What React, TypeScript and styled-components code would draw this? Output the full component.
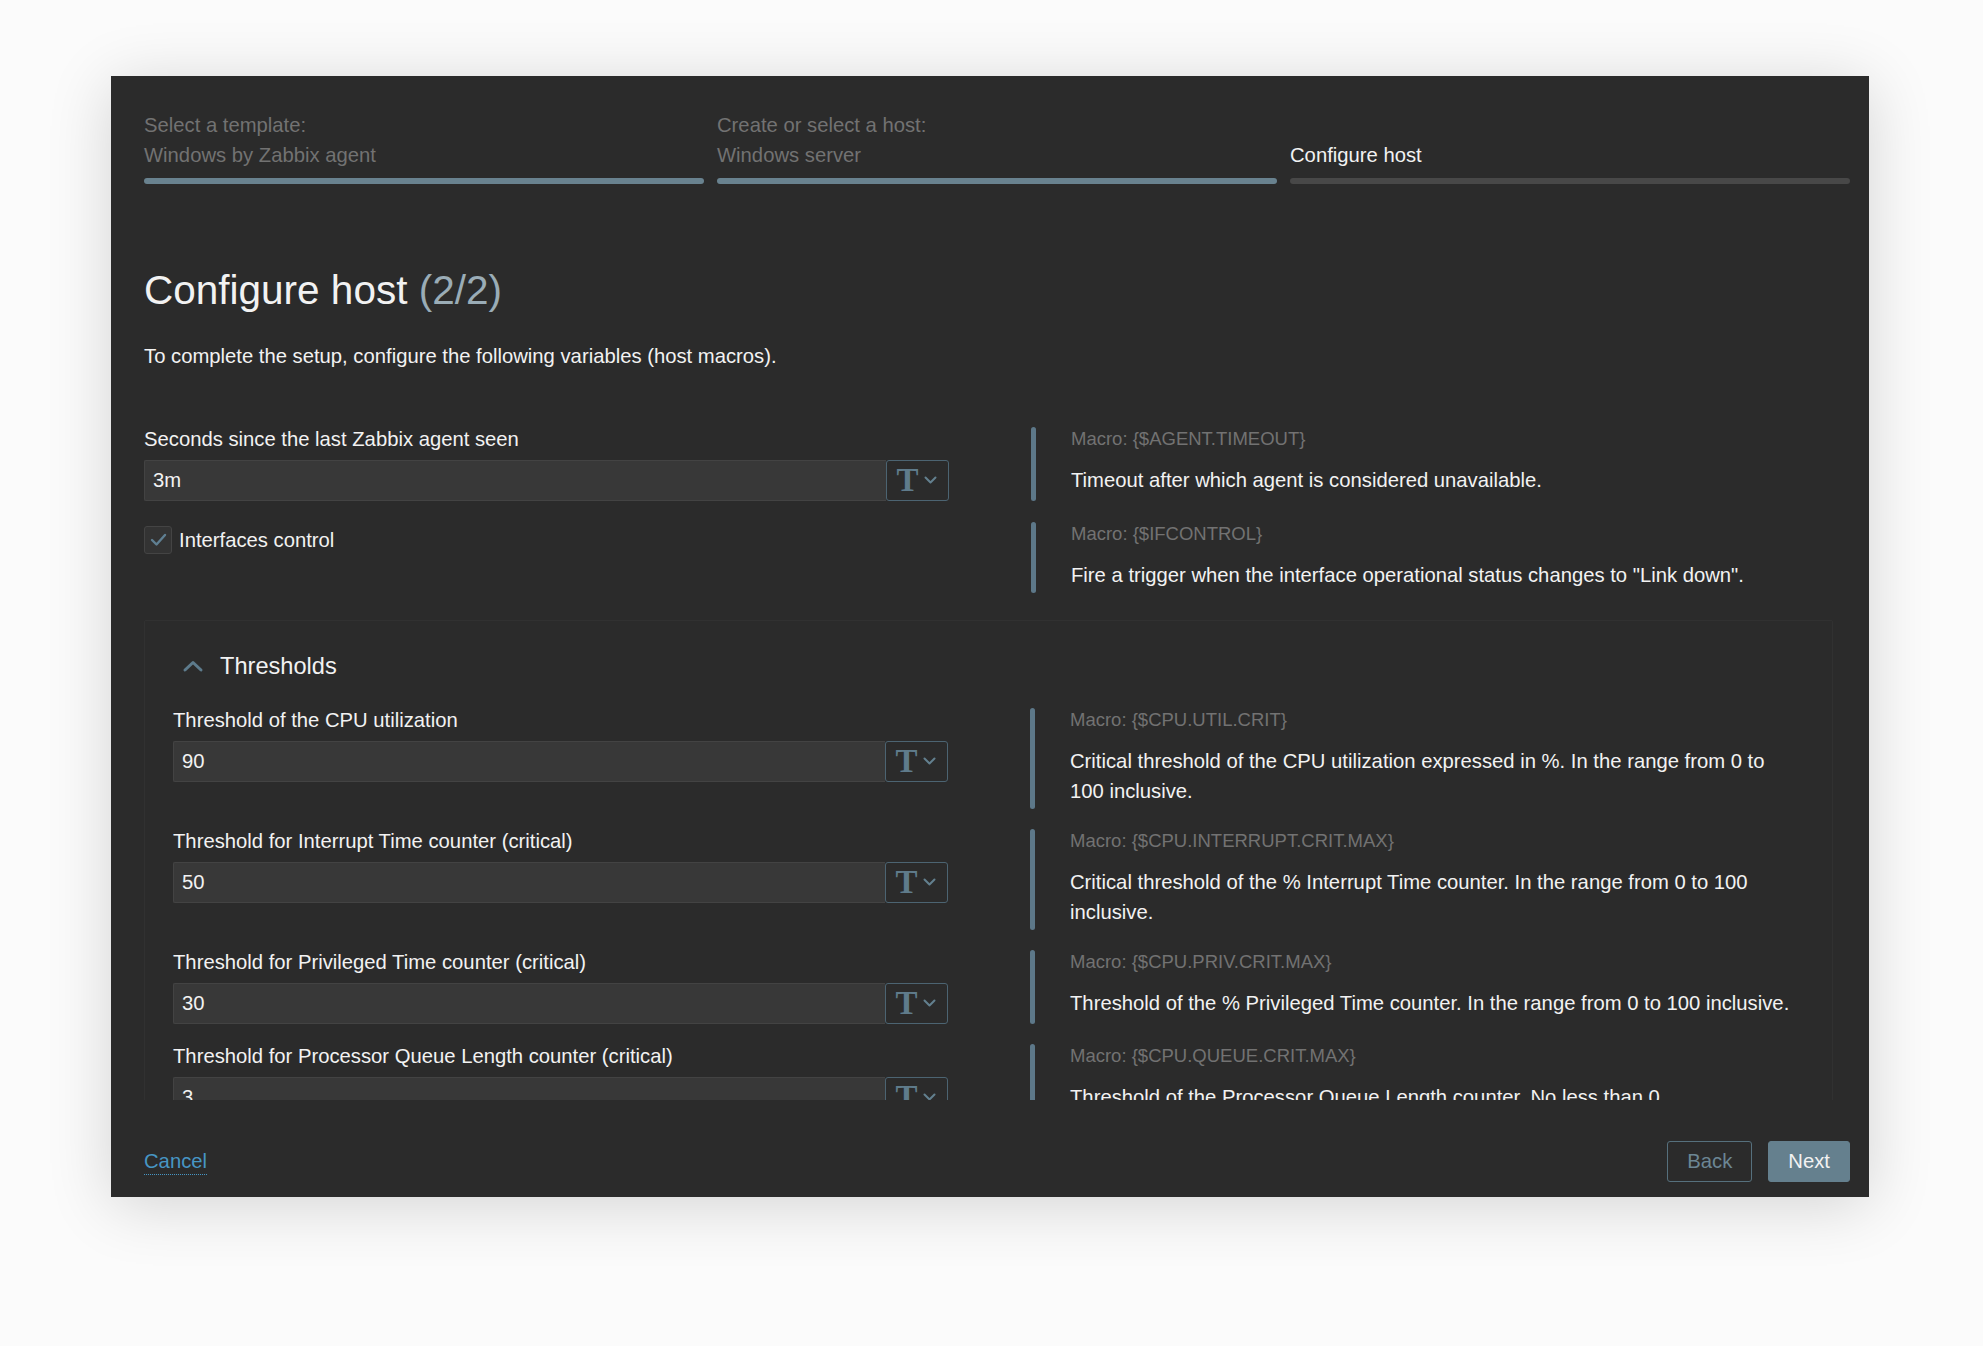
import React from "react";
import styled, { createGlobalStyle } from "styled-components";

const GlobalStyle = createGlobalStyle`
  html, body {
    margin: 0;
    padding: 0;
    background: #fbfbfb;
  }
  * {
    box-sizing: border-box;
  }
`;

interface StepInfo {
  title: string;
  value: string;
  done: boolean;
}

interface MacroField {
  label: string;
  value: string;
  macro: string;
  description: string;
}

const steps: StepInfo[] = [
  { title: "Select a template:", value: "Windows by Zabbix agent", done: true },
  { title: "Create or select a host:", value: "Windows server", done: true },
  { title: "", value: "Configure host", done: false },
];

const thresholds: MacroField[] = [
  {
    label: "Threshold of the CPU utilization",
    value: "90",
    macro: "{$CPU.UTIL.CRIT}",
    description:
      "Critical threshold of the CPU utilization expressed in %. In the range from 0 to 100 inclusive.",
  },
  {
    label: "Threshold for Interrupt Time counter (critical)",
    value: "50",
    macro: "{$CPU.INTERRUPT.CRIT.MAX}",
    description:
      "Critical threshold of the % Interrupt Time counter. In the range from 0 to 100 inclusive.",
  },
  {
    label: "Threshold for Privileged Time counter (critical)",
    value: "30",
    macro: "{$CPU.PRIV.CRIT.MAX}",
    description:
      "Threshold of the % Privileged Time counter. In the range from 0 to 100 inclusive.",
  },
  {
    label: "Threshold for Processor Queue Length counter (critical)",
    value: "3",
    macro: "{$CPU.QUEUE.CRIT.MAX}",
    description:
      "Threshold of the Processor Queue Length counter. No less than 0.",
  },
];

function TypeSelect() {
  return (
    <TypeButton>
      <TypeGlyph>T</TypeGlyph>
      <svg width="13" height="9" viewBox="0 0 13 9">
        <polyline
          points="1.5,1.5 6.5,6.5 11.5,1.5"
          fill="none"
          stroke="#63808f"
          strokeWidth="2"
          strokeLinecap="round"
          strokeLinejoin="round"
        />
      </svg>
    </TypeButton>
  );
}

function MacroInput(props: { value: string }) {
  return (
    <InputGroup>
      <TextInput>{props.value}</TextInput>
      <TypeSelect />
    </InputGroup>
  );
}

function Help(props: { macro: string; description: string }) {
  return (
    <HelpBlock>
      <HelpBar />
      <HelpText>
        <MacroName>Macro: {props.macro}</MacroName>
        <HelpDescription>{props.description}</HelpDescription>
      </HelpText>
    </HelpBlock>
  );
}

export default function App() {
  return (
    <>
      <GlobalStyle />
      <Page>
        <Modal>
          <Steps>
            {steps.map((s) => (
              <Step key={s.value}>
                <StepLabel $done={s.done}>
                  {s.title && <div>{s.title}</div>}
                  <div>{s.value}</div>
                </StepLabel>
                <StepBar $done={s.done} />
              </Step>
            ))}
          </Steps>

          <Body>
            <Title>
              Configure host <TitleCount>(2/2)</TitleCount>
            </Title>
            <Intro>
              To complete the setup, configure the following variables (host
              macros).
            </Intro>

            <FormGrid $left={805}>
              <Field>
                <FieldLabel>Seconds since the last Zabbix agent seen</FieldLabel>
                <MacroInput value="3m" />
              </Field>
              <Help
                macro="{$AGENT.TIMEOUT}"
                description="Timeout after which agent is considered unavailable."
              />

              <CheckRow>
                <CheckBox>
                  <svg width="17" height="14" viewBox="0 0 17 14">
                    <polyline
                      points="2,7 6.5,11.5 15,2"
                      fill="none"
                      stroke="#5f7f92"
                      strokeWidth="2.4"
                      strokeLinecap="round"
                      strokeLinejoin="round"
                    />
                  </svg>
                </CheckBox>
                <CheckLabel>Interfaces control</CheckLabel>
              </CheckRow>
              <Help
                macro="{$IFCONTROL}"
                description={'Fire a trigger when the interface operational status changes to "Link down".'}
              />
            </FormGrid>

            <Section>
              <SectionHeader>
                <svg width="22" height="14" viewBox="0 0 22 14">
                  <polyline
                    points="3,11 11,3.5 19,11"
                    fill="none"
                    stroke="#5d7b8c"
                    strokeWidth="3"
                    strokeLinecap="round"
                    strokeLinejoin="round"
                  />
                </svg>
                <SectionTitle>Thresholds</SectionTitle>
              </SectionHeader>
              <FormGrid $left={775} $gap={20}>
                {thresholds.map((t) => (
                  <React.Fragment key={t.macro}>
                    <Field>
                      <FieldLabel>{t.label}</FieldLabel>
                      <MacroInput value={t.value} />
                    </Field>
                    <Help macro={t.macro} description={t.description} />
                  </React.Fragment>
                ))}
              </FormGrid>
            </Section>
          </Body>

          <Footer>
            <CancelLink>Cancel</CancelLink>
            <ButtonRow>
              <Button>Back</Button>
              <Button $primary>Next</Button>
            </ButtonRow>
          </Footer>
        </Modal>
      </Page>
    </>
  );
}

const Page = styled.div`
  width: 1983px;
  height: 1346px;
  padding: 76px 0 0 111px;
  font-family: "Liberation Sans", Arial, sans-serif;
  overflow: hidden;
`;

const Modal = styled.div`
  width: 1758px;
  height: 1121px;
  display: flex;
  flex-direction: column;
  background: #2b2b2b;
  color: #f2f2f2;
  box-shadow: 0 8px 60px rgba(0, 0, 0, 0.16);
`;

// steps
const Steps = styled.div`
  display: grid;
  grid-template-columns: repeat(3, 1fr);
  column-gap: 13px;
  padding: 34px 19px 0 33px;
  flex-shrink: 0;
`;

const Step = styled.div`
  display: flex;
  flex-direction: column;
`;

const StepLabel = styled.div<{ $done: boolean }>`
  height: 60px;
  display: flex;
  flex-direction: column;
  justify-content: flex-end;
  font-size: 20.25px;
  line-height: 30px;
  color: ${(p) => (p.$done ? "#727272" : "#f2f2f2")};
`;

const StepBar = styled.div<{ $done: boolean }>`
  margin-top: 8px;
  height: 6px;
  border-radius: 3px;
  background: ${(p) => (p.$done ? "#69828f" : "#484848")};
`;

// body
const Body = styled.div`
  flex: 1;
  overflow: hidden;
  padding: 82px 19px 0 33px;
`;

const Title = styled.h1`
  margin: 0;
  font-size: 40.5px;
  line-height: 48px;
  font-weight: normal;
  color: #f2f2f2;
`;

const TitleCount = styled.span`
  color: #9aacb6;
`;

const Intro = styled.p`
  margin: 27px 0 56px;
  font-size: 20.25px;
  line-height: 30px;
`;

const FormGrid = styled.div<{ $left: number; $gap?: number }>`
  display: grid;
  grid-template-columns: ${(p) => p.$left}px 1fr;
  column-gap: 82px;
  row-gap: ${(p) => p.$gap ?? 21}px;
  align-items: start;
`;

const Field = styled.div`
  display: flex;
  flex-direction: column;
`;

const FieldLabel = styled.label`
  font-size: 20.25px;
  line-height: 25px;
  margin-bottom: 8px;
`;

const InputGroup = styled.div`
  display: flex;
  height: 41px;
`;

const TextInput = styled.div`
  flex: 1;
  display: flex;
  align-items: center;
  padding: 0 8px;
  background: #383838;
  border: 1px solid #434343;
  border-right: none;
  border-radius: 2px 0 0 2px;
  font-size: 20.25px;
`;

const TypeButton = styled.div`
  width: 63px;
  display: flex;
  align-items: center;
  justify-content: center;
  gap: 5px;
  padding-right: 2px;
  background: #2b2b2b;
  border: 1px solid #4c6472;
  border-radius: 3px;
`;

const TypeGlyph = styled.span`
  font-family: "Liberation Serif", "Times New Roman", serif;
  font-size: 33px;
  line-height: 1;
  font-weight: bold;
  color: #5f7b8b;
`;

const CheckRow = styled.div`
  display: flex;
  align-items: center;
  height: 30px;
  margin-top: 3px;
`;

const CheckBox = styled.span`
  width: 28px;
  height: 28px;
  display: flex;
  align-items: center;
  justify-content: center;
  background: #333333;
  border: 1px solid #444444;
  border-radius: 3px;
`;

const CheckLabel = styled.span`
  margin-left: 7px;
  font-size: 20.25px;
`;

// help column
const HelpBlock = styled.div`
  display: flex;
  align-self: stretch;
  align-items: stretch;
`;

const HelpBar = styled.div`
  width: 5px;
  flex-shrink: 0;
  border-radius: 3px;
  background: #5d7889;
`;

const HelpText = styled.div`
  margin-left: 35px;
  padding-bottom: 3px;
`;

const MacroName = styled.div`
  font-size: 18.5px;
  line-height: 24px;
  color: #727272;
`;

const HelpDescription = styled.div`
  margin-top: 14px;
  font-size: 20.25px;
  line-height: 30px;
`;

// thresholds
const Section = styled.div`
  margin: 27px 17px 0 0;
  padding: 30px 35px 30px 28px;
  border: 1px solid #313131;
  border-radius: 2px;
`;

const SectionHeader = styled.div`
  display: flex;
  align-items: center;
  height: 30px;
  margin-bottom: 27px;
  padding-left: 9px;
`;

const SectionTitle = styled.span`
  margin-left: 16px;
  font-size: 23.6px;
`;

// footer
const Footer = styled.div`
  flex-shrink: 0;
  height: 97px;
  display: flex;
  align-items: flex-start;
  justify-content: space-between;
  padding: 41px 19px 15px 33px;
`;

const CancelLink = styled.a`
  margin-top: 7px;
  font-size: 20.25px;
  line-height: 26px;
  color: #4796c4;
  border-bottom: 1px dotted #4796c4;
  cursor: pointer;
`;

const ButtonRow = styled.div`
  display: flex;
  gap: 16px;
`;

const Button = styled.button<{ $primary?: boolean }>`
  height: 41px;
  padding: 0 19px;
  font-family: "Liberation Sans", Arial, sans-serif;
  font-size: 20.25px;
  border-radius: 3px;
  border: 1px solid ${(p) => (p.$primary ? "#65808e" : "#56707d")};
  background: ${(p) => (p.$primary ? "#65808e" : "transparent")};
  color: ${(p) => (p.$primary ? "#f2f2f2" : "#6c8694")};
  cursor: pointer;
`;
